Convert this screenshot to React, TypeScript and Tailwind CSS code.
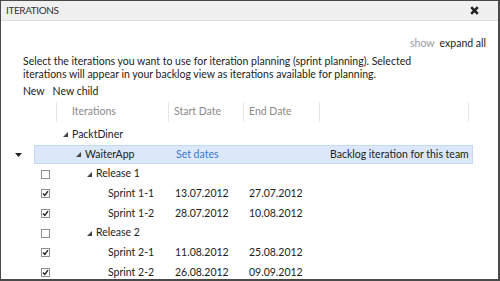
import React from 'react';

// --- DATA ---
interface Row {
    name: string;
    level: number;
    expander?: boolean;
    checkbox?: 'none' | 'off' | 'on';
    start?: string;
    end?: string;
    current?: boolean;
}

const rows: Row[] = [
    { name: 'PacktDiner', level: 0, expander: true, checkbox: 'none' },
    { name: 'WaiterApp', level: 1, expander: true, checkbox: 'none', current: true },
    { name: 'Release 1', level: 2, expander: true, checkbox: 'off' },
    { name: 'Sprint 1-1', level: 3, checkbox: 'on', start: '13.07.2012', end: '27.07.2012' },
    { name: 'Sprint 1-2', level: 3, checkbox: 'on', start: '28.07.2012', end: '10.08.2012' },
    { name: 'Release 2', level: 2, expander: true, checkbox: 'off' },
    { name: 'Sprint 2-1', level: 3, checkbox: 'on', start: '11.08.2012', end: '25.08.2012' },
    { name: 'Sprint 2-2', level: 3, checkbox: 'on', start: '26.08.2012', end: '09.09.2012' },
];

function Expanded() {
    return (
        <svg width="5" height="5" viewBox="0 0 5 5" className="shrink-0">
            <polygon points="5,0 5,5 0,5" fill="#444" />
        </svg>
    );
}

function Checkbox({ checked }: { checked: boolean }) {
    return (
        <div className="w-[9px] h-[9px] border border-[#8f8f8f] bg-white flex items-center justify-center">
            {checked && (
                <svg width="7" height="7" viewBox="0 0 7 7">
                    <path d="M1 3.5 L2.8 5.5 L6 1.2" stroke="#222" strokeWidth="1.4" fill="none" />
                </svg>
            )}
        </div>
    );
}

export default function App() {
    return (
        <div
            className="w-[500px] h-[281px] overflow-hidden bg-white border-t border-l border-r-2 border-b-2 border-[#4a4a4a] text-[10.5px] text-[#222]"
            style={{ fontFamily: '"Segoe UI", Lato, "Open Sans", sans-serif' }}
        >
            {/* TITLE BAR */}
            <div className="h-[20px] bg-[#f0f0f0] border-b border-[#dedede] flex items-center justify-between pl-[5px] pr-[19px]">
                <span className="text-[10px] text-[#333] tracking-[-0.4px]">ITERATIONS</span>
                <svg width="9" height="9" viewBox="0 0 9 9">
                    <path d="M1.2 1.2 L7.8 7.8 M7.8 1.2 L1.2 7.8" stroke="#222" strokeWidth="2.6" />
                </svg>
            </div>

            {/* TOOLBAR TOP */}
            <div className="flex justify-end pr-[12px] pt-[15px] h-[34px] gap-[5px]">
                <span className="text-[#999]">show</span>
                <span>expand all</span>
            </div>

            {/* DESCRIPTION */}
            <div className="pl-[22px] pr-[10px] leading-[12.5px]">
                <p>Select the iterations you want to use for iteration planning (sprint planning). Selected</p>
                <p>iterations will appear in your backlog view as iterations available for planning.</p>
            </div>

            <div className="pl-[22px] pt-[3px] flex gap-[8px] h-[20px] items-center">
                <span>New</span>
                <span>New child</span>
            </div>

            {/* HEADER */}
            <div className="flex h-[20px] items-center text-[#8a8a8a] mt-[2px]">
                <div className="w-[55px]" />
                <div className="w-[112px] h-full border-l border-[#e6e6e6] pl-[15px] flex items-center">Iterations</div>
                <div className="w-[75px] h-full border-l border-[#e6e6e6] pl-[5px] flex items-center">Start Date</div>
                <div className="w-[76px] h-full border-l border-[#e6e6e6] pl-[5px] flex items-center">End Date</div>
                <div className="w-[150px] h-full border-l border-r border-[#e6e6e6]" />
            </div>

            {/* ROWS */}
            <div className="mt-[3px]">
                {rows.map((row) => (
                    <div key={row.name} className="flex h-[19.7px] items-center">
                        <div className="w-[33px] flex justify-center pl-[2px]">
                            {row.current && (
                                <svg width="7" height="4" viewBox="0 0 7 4">
                                    <polygon points="0,0 7,0 3.5,4" fill="#222" />
                                </svg>
                            )}
                        </div>
                        <div
                            className={`flex items-center h-full w-[439px] ${
                                row.current ? 'bg-[#dae8fa] border border-[#c4daf4]' : ''
                            }`}
                        >
                            <div className="w-[22px] flex justify-end pr-[6px]">
                                {row.checkbox === 'off' && <Checkbox checked={false} />}
                                {row.checkbox === 'on' && <Checkbox checked />}
                            </div>
                            <div className="w-[119px] flex items-center">
                                <div style={{ width: 7 + row.level * 12 }} />
                                {row.expander ? <Expanded /> : <div className="w-[5px]" />}
                                <span className="ml-[4px]">{row.name}</span>
                            </div>
                            <div className="w-[74px]">
                                {row.current ? <span className="text-[#3b79d0]">Set dates</span> : row.start}
                            </div>
                            <div className="w-[75px]">{row.end}</div>
                            <div className="pl-[5px]">{row.current && 'Backlog iteration for this team'}</div>
                        </div>
                    </div>
                ))}
            </div>
        </div>
    );
}
